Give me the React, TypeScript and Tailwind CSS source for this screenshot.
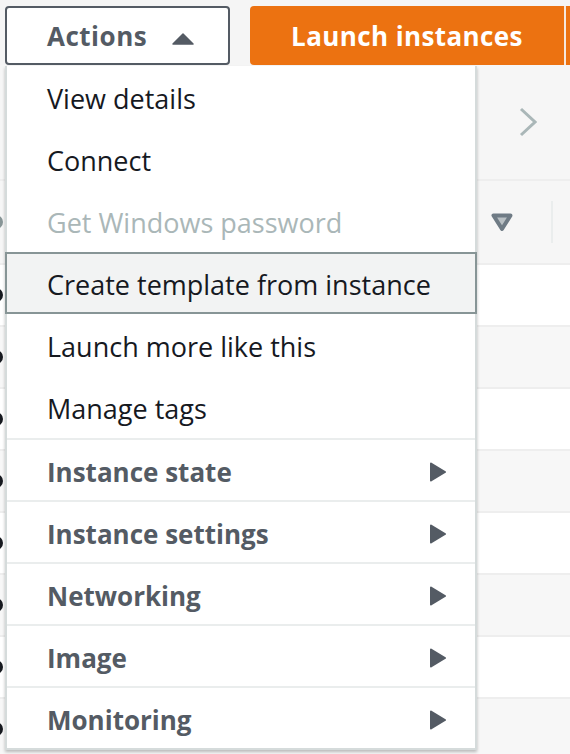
import React from "react";

const font = "font-['Open_Sans','Liberation_Sans',sans-serif]";

const plainItems = [
  { label: "View details" },
  { label: "Connect" },
  { label: "Get Windows password", disabled: true },
  { label: "Create template from instance", active: true },
  { label: "Launch more like this" },
  { label: "Manage tags" },
];

const subMenus = ["Instance state", "Instance settings", "Networking", "Image", "Monitoring"];

const Caret = () => (
  <svg width="16" height="20" viewBox="0 0 16 20">
    <path d="M1 1.5 L15 10 L1 18.5 Z" fill="#545b64" stroke="#545b64" strokeWidth="2" strokeLinejoin="round" />
  </svg>
);

const Dot = () => <div className="ml-[-11px] w-[14px] h-[14px] rounded-full bg-[#16191f] shrink-0" />;

const App = () => {
  const rows = [false, true, false, true, false, true, false, true];

  return (
    <div className={`relative w-[570px] h-[754px] overflow-hidden bg-[#f5f5f5] ${font}`}>
      {/* Toolbar */}
      <div className="flex items-start pt-[6px] pl-[5px] h-[65px]">
        <div className="relative w-[225px] h-[59px] bg-white border-2 border-[#545b64] rounded-[4px] flex items-center pl-[40px]">
          <span className="text-[26px] font-bold text-[#545b64] leading-none tracking-[0.5px]">Actions</span>
          <svg className="absolute left-[165px] top-[25px]" width="22" height="12" viewBox="0 0 22 12">
            <path d="M11 1 L21 11 L1 11 Z" fill="#545b64" stroke="#545b64" strokeWidth="1.5" strokeLinejoin="round" />
          </svg>
        </div>
        <div className="ml-[20px] w-[314px] h-[59px] bg-[#ec7211] rounded-l-[4px] flex items-center justify-center">
          <span className="text-[26px] font-bold text-white leading-none tracking-[0.4px]">Launch instances</span>
        </div>
        <div className="w-[2px] h-[59px] bg-[#f6e7dc]" />
        <div className="flex-1 h-[59px] bg-[#ec7211]" />
      </div>

      {/* Table behind the menu */}
      <div className="flex flex-col">
        <div className="h-[116px] bg-[#f6f6f6] flex items-center justify-end pr-[33px] border-b-2 border-[#eeeeee]">
          <svg width="18" height="30" viewBox="0 0 18 30">
            <path d="M2 2 L16 15 L2 28" fill="none" stroke="#aab7b8" strokeWidth="3" />
          </svg>
        </div>
        <div className="h-[84px] bg-[#f6f6f6] flex items-center border-b-2 border-[#eeeeee]">
          <div className="ml-[-11px] w-[14px] h-[14px] rounded-full bg-[#879596]" />
          <div className="ml-auto mr-[38px]">
            <svg width="22" height="19" viewBox="0 0 22 19">
              <path d="M2.5 2.5 L19.5 2.5 L11 16 Z" fill="#b9c0c4" stroke="#6f7b85" strokeWidth="4" strokeLinejoin="round" />
            </svg>
          </div>
          <div className="w-[2px] h-[42px] bg-[#eaeded] mr-[17px]" />
        </div>
        {rows.map((gray, i) => (
          <div
            key={i}
            className={`h-[62px] flex items-center border-b-2 border-[#eeeeee] ${gray ? "bg-[#f7f7f7]" : "bg-white"}`}
          >
            <Dot />
          </div>
        ))}
      </div>

      {/* Dropdown menu */}
      <div className="absolute left-[5px] top-[66px] w-[472px] bg-white border-x-2 border-b-2 border-[#d5dbdb] shadow-[0_2px_3px_rgba(0,0,0,0.25)]">
        {plainItems.map((item) => (
          <div
            key={item.label}
            className={`h-[62px] flex items-center pt-[3px] text-[27px] leading-none ${
              item.active
                ? "-mx-[2px] pl-[40px] bg-[#f2f3f3] border-2 border-[#879596] text-[#16191f]"
                : item.disabled
                ? "pl-[40px] text-[#aab7b8]"
                : "pl-[40px] text-[#16191f]"
            }`}
          >
            {item.label}
          </div>
        ))}
        {subMenus.map((label) => (
          <div
            key={label}
            className="h-[62px] flex items-center justify-between pt-[3px] pl-[40px] pr-[29px] border-t-2 border-[#eaeded] text-[26px] font-bold leading-none text-[#545b64]"
          >
            <span>{label}</span>
            <Caret />
          </div>
        ))}
      </div>
    </div>
  );
};

export default App;
